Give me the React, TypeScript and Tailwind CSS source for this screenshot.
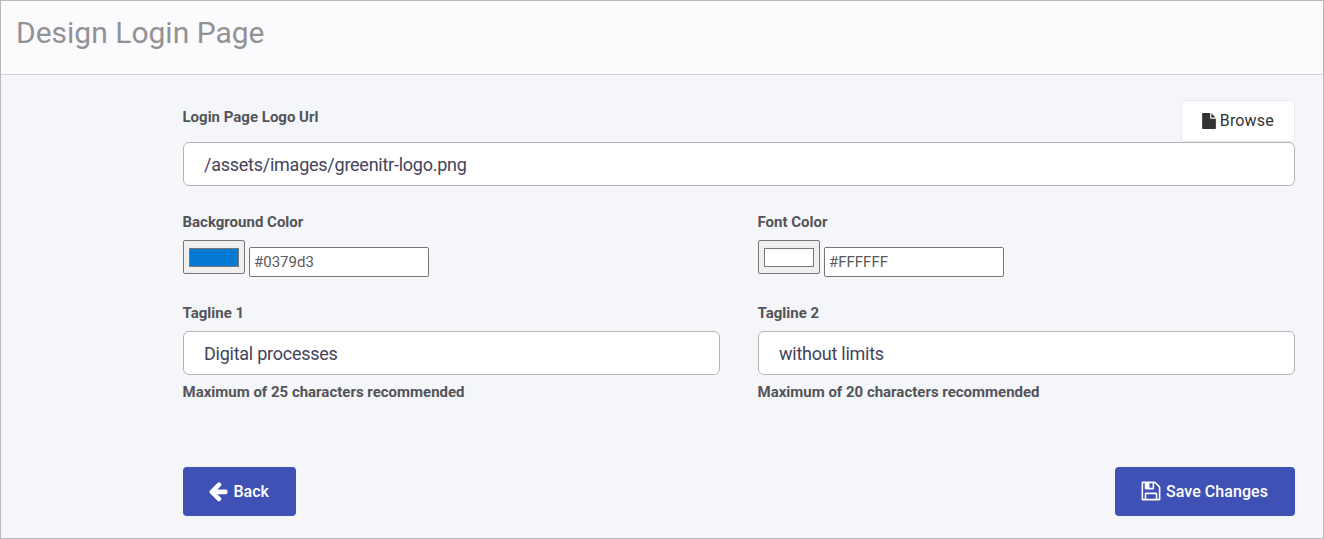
import { useState } from "react";

const PATHS = {
  file: "M1152 512v-472q22 14 36 28l408 408q14 14 28 36h-472zm-128 32q0 40 28 68t68 28h544v1056q0 40-28 68t-68 28h-1344q-40 0-68-28t-28-68v-1600q0-40 28-68t68-28h800v544z",
  back: "M1664 896v128q0 53-32.5 90.5t-84.5 37.5h-704l293 294q38 36 38 90t-38 90l-75 76q-37 37-90 37-52 0-91-37l-651-652q-37-37-37-90 0-52 37-91l651-650q38-38 91-38 52 0 90 38l75 74q38 38 38 91t-38 91l-293 293h704q52 0 84.500 37.500t32.500 90.500z",
  save: "M512 1536h768v-384h-768v384zm896 0h128v-896q0-14-10-38.5t-20-34.5l-281-281q-10-10-34-20t-39-10v416q0 40-28 68t-68 28h-576q-40 0-68-28t-28-68v-416h-128v1280h128v-416q0-40 28-68t68-28h832q40 0 68 28t28 68v416zm-384-928v-320q0-13-9.500-22.500t-22.500-9.500h-192q-13 0-22.500 9.500t-9.500 22.500v320q0 13 9.500 22.500t22.500 9.500h192q13 0 22.500-9.500t9.500-22.500zm640 32v928q0 40-28 68t-68 28h-1344q-40 0-68-28t-28-68v-1344q0-40 28-68t68-28h928q40 0 88 20t76 48l280 280q28 28 48 76t20 88z",
};

function Icon({ name, className }: { name: keyof typeof PATHS; className: string }) {
  return (
    <svg viewBox="0 0 1792 1792" fill="currentColor" aria-hidden="true" className={`shrink-0 ${className}`}>
      <path d={PATHS[name]} />
    </svg>
  );
}

const labelClass = "-ml-[0.5px] block text-[15px] leading-5 font-bold text-[#535458]";
const inputClass =
  "block h-11 w-full rounded-md border border-[#b3b4b8] bg-white px-5 text-[18px] tracking-[-0.25px] text-[#43445a] outline-none";

function ColorField({ label, initial }: { label: string; initial: string }) {
  const [value, setValue] = useState(initial);
  return (
    <div>
      <label className={labelClass}>{label}</label>
      <div className="mt-2 flex gap-1">
        <div className="h-[34px] w-[62px] rounded-xs border border-[#767676] bg-[#efefef] px-[5px] py-[7px]">
          <div className="h-[19px] w-[50px] border border-[#777777]" style={{ backgroundColor: value }} />
        </div>
        <input
          value={value}
          onChange={(e) => setValue(e.target.value)}
          className="mt-[7px] h-[30px] w-[180px] rounded-xs border border-[#767676] bg-white px-1 text-[15px] text-[#5b5b5b] outline-none"
        />
      </div>
    </div>
  );
}

function TaglineField({ label, text, hint }: { label: string; text: string; hint: string }) {
  return (
    <div>
      <label className={labelClass}>{label}</label>
      <input defaultValue={text} className={`${inputClass} mt-2`} />
      <p className={`${labelClass} mt-[7px]`}>{hint}</p>
    </div>
  );
}

export default function App() {
  return (
    <div className="flex h-[539px] w-full flex-col border border-[#b9b9bb] bg-[#f5f6fa] font-[Roboto,sans-serif]">
      <header className="h-[74px] border-b border-[#d2d3d8] bg-[#fbfbfd] px-[15px] pt-3">
        <h1 className="text-[30px] leading-10 text-[#929294]">Design Login Page</h1>
      </header>
      <main className="flex flex-1 flex-col pr-7 pl-[182px]">
        <div className="mt-[25px] flex h-[42px] items-start justify-between">
          <label className={`${labelClass} mt-[7px]`}>Login Page Logo Url</label>
          <button className="flex h-[42px] w-[114px] items-center justify-start gap-[3px] rounded-sm border border-[#e9eaee] bg-white pl-[18.800px] text-[16px] tracking-[0.15px] text-[#333333]">
            <Icon name="file" className="mb-px h-4 w-4" />
            Browse
          </button>
        </div>
        <input defaultValue="/assets/images/greenitr-logo.png" className={inputClass} />
        <div className="mt-[26px] grid grid-cols-2 gap-x-[38px]">
          <ColorField label="Background Color" initial="#0379d3" />
          <ColorField label="Font Color" initial="#FFFFFF" />
        </div>
        <div className="mt-[26px] grid grid-cols-2 gap-x-[38px]">
          <TaglineField label="Tagline 1" text="Digital processes" hint="Maximum of 25 characters recommended" />
          <TaglineField label="Tagline 2" text="without limits" hint="Maximum of 20 characters recommended" />
        </div>
        <div className="mt-[65px] flex justify-between">
          <button className="flex h-[49px] w-[113px] items-center gap-1 rounded-sm bg-[#3f51b5] pl-[24.400px] text-[16px] font-medium tracking-[0.05px] text-white">
            <Icon name="back" className="mb-px h-[22px] w-[22px]" />
            Back
          </button>
          <button className="flex h-[49px] w-[180px] items-center gap-1 rounded-sm bg-[#3f51b5] pl-[25px] text-[16px] font-medium tracking-[0.05px] text-white">
            <Icon name="save" className="mb-px h-[22px] w-[22px]" />
            Save Changes
          </button>
        </div>
      </main>
    </div>
  );
}
